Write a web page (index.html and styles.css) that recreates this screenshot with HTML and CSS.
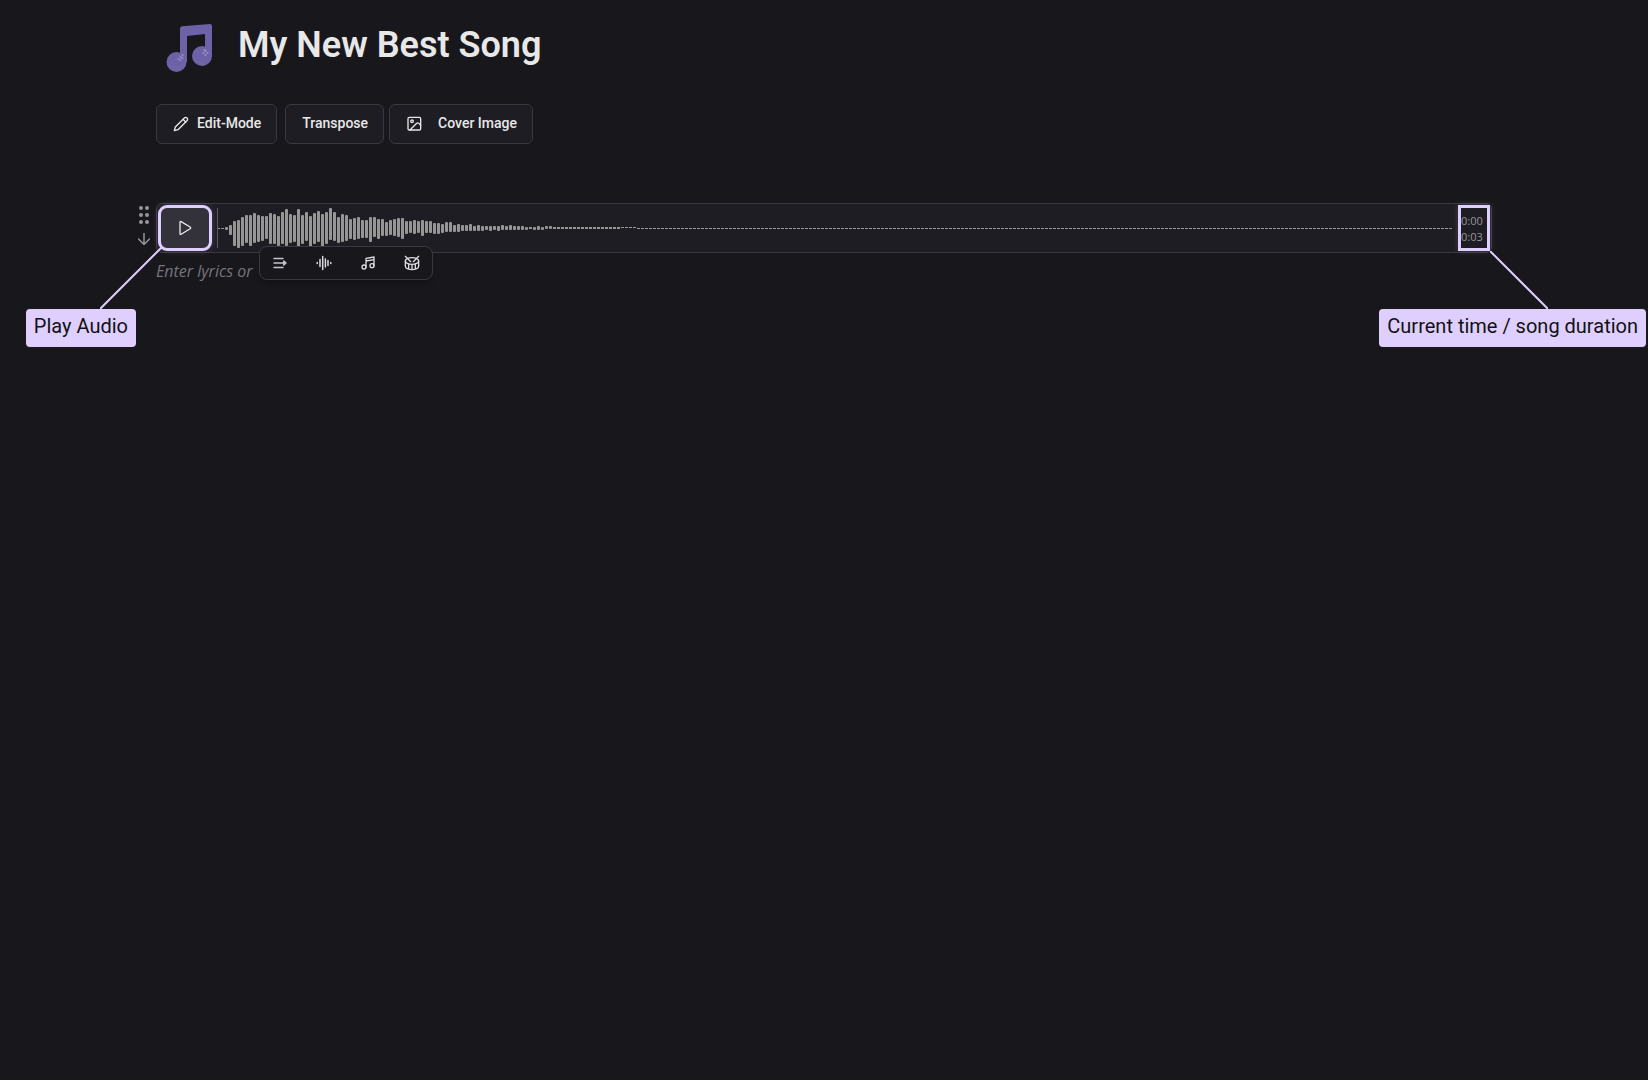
FILE: index.html
```html
<!DOCTYPE html>
<html lang="en">
<head>
  <meta charset="UTF-8">
  <meta name="viewport" content="width=device-width, initial-scale=1.0">
  <title>My New Best Song</title>
  <link rel="stylesheet" href="styles.css">
</head>
<body>
  <main class="page">
    <header class="song-header">
      <svg class="song-icon" viewBox="0 0 48 50" aria-hidden="true">
        <path d="M14 5.500Q14 3.500 16 3.200L44 1Q46 1 46 3V33H39V11L21 13V39H14Z" fill="#6d62a8"/>
        <circle cx="10.500" cy="39" r="10" fill="#6d62a8"/>
        <circle cx="36" cy="33" r="10" fill="#6d62a8"/>
        <path d="M12 36h1M14 34h1M16 32h1M14 37h1M16 35h1M37 30h1M39 28h1M41 30h1M39 32h1M38 27h1" stroke="#b9b2d4" stroke-width="1"/>
        <path d="M4 43h1M7 44h1M10 44h1M13 44h1M6 46h1M9 47h1M12 46h1M16 43h1M30 38h1M33 39h1M36 40h1M39 39h1M34 41h1M37 42h1" stroke="#777390" stroke-width="1"/>
      </svg>
      <h1>My New Best Song</h1>
    </header>

    <div class="actions">
      <button class="btn edit-btn">
        <svg class="icon" viewBox="0 0 24 24"><path d="M17 3a2.830 2.830 0 1 1 4 4L7.500 20.500 2 22l1.500-5.500Z"/><path d="m15 5 4 4"/></svg>
        Edit-Mode
      </button>
      <button class="btn">Transpose</button>
      <button class="btn cover-btn">
        <svg class="icon" viewBox="0 0 24 24"><rect x="3" y="2" width="19" height="19" rx="2"/><circle cx="9" cy="8" r="2"/><path d="m22 14-3-3a2 2 0 0 0-3 0L6 21"/></svg>
        Cover Image
      </button>
    </div>

    <!-- Audio block -->
    <section class="block">
      <div class="handle">
        <svg class="grip" viewBox="0 0 10 18"><circle cx="2" cy="2" r="2"/><circle cx="8" cy="2" r="2"/><circle cx="2" cy="9" r="2"/><circle cx="8" cy="9" r="2"/><circle cx="2" cy="16" r="2"/><circle cx="8" cy="16" r="2"/></svg>
        <svg class="down" viewBox="0 0 12 12"><path d="M6 0v11M0.500 6 6 11.500 11.500 6"/></svg>
      </div>

      <div class="player">
        <div class="play-wrap">
          <button class="play" aria-label="Play">
            <svg viewBox="0 0 14 16"><path d="M2 2.200Q2 1 3.100 1.600L12.100 7Q13.300 8 12.100 8.800L3.100 14.200Q2 14.800 2 13.600Z"/></svg>
          </button>
          <div class="callout callout-play">
            <svg viewBox="0 0 62 62"><path d="M62 0 0 62"/></svg>
            <span>Play Audio</span>
          </div>
        </div>
        <div class="wave">
          <svg id="waveform" aria-hidden="true"></svg>
          <div class="playhead"></div>
        </div>
        <div class="time">
          <span>0:00</span>
          <span>0:03</span>
          <div class="callout callout-time">
            <svg viewBox="0 0 58 58"><path d="M0 0 58 58"/></svg>
            <span>Current time / song duration</span>
          </div>
        </div>
      </div>
    </section>

    <!-- Lyrics line -->
    <section class="lyrics">
      <span class="placeholder">Enter lyrics or</span>
      <div class="toolbar">
        <button class="add-line" aria-label="Add line"><svg viewBox="0 0 16 16"><path d="M2 3.500h9M2 8h11M2 12.500h9"/><path d="M11.800 6 14 8l-2.200 2Z" fill="currentColor"/></svg></button>
        <button class="add-audio" aria-label="Add audio"><svg viewBox="0 0 16 16"><path d="M1.200 7.500v1M4 4.500v7M6.700 1.500v13M9.400 4v8M12 5.500v5M14.800 7.500v1"/></svg></button>
        <button aria-label="Add chords"><svg viewBox="0 0 24 24"><path d="M9 18V5l12-2v13M9 9l12-2"/><circle cx="6" cy="18" r="3"/><circle cx="18" cy="16" r="3"/></svg></button>
        <button aria-label="Add drums"><svg viewBox="0 0 24 24"><path d="m2 2 8 8M22 2l-8 8M7 13.400v7.900M12 14v8M17 13.400v7.900M2 9v8a10 5 0 0 0 20 0V9"/><ellipse cx="12" cy="9" rx="10" ry="5"/></svg></button>
      </div>
    </section>
  </main>

  <script>
    const waveform = document.getElementById('waveform');

    // [above, below] the center line, one pair per bar
    const peaks = [
      [1,2],[3,7],[7,18],[8,20],[11,18],[13,15],[13,18],[15,15],[13,14],[12,13],
      [12,11],[15,16],[14,16],[12,18],[16,16],[19,18],[14,15],[13,14],[19,19],[13,16],
      [16,13],[12,20],[15,16],[17,14],[14,20],[16,16],[20,12],[16,13],[11,15],[14,14],
      [13,13],[9,11],[10,12],[11,11],[8,10],[8,10],[11,14],[11,9],[9,11],[9,8],
      [6,8],[8,7],[9,8],[10,9],[10,11],[7,6],[7,5],[8,6],[7,5],[8,8],
      [7,5],[7,5],[5,6],[5,6],[4,5],[6,4],[6,4],[3,4],[4,4],[3,3],
      [3,3],[4,3],[2,3],[3,3],[2,3],[2,2],[2,3],[2,2],[2,3],[3,2],
      [2,2],[3,2],[2,2],[2,2],[2,2],[1,2],[1,1],[1,2],[2,2],[1,2],
      [2,1],[2,1]
    ];

    function drawWaveform() {
      const count = Math.floor((waveform.clientWidth + 1) / 4);
      let bars = '';
      for (let i = 0; i < count; i++) {
        const n = i - 2;
        let up = 0, down = 1;
        if (n >= 0 && n < peaks.length) {
          [up, down] = peaks[n];
        } else if (n >= peaks.length && n < 99) {
          [up, down] = [1, 1];
        } else if (n >= 99 && n < 103) {
          [up, down] = [1, 0];
        }
        const radius = up + down > 2 ? 1 : 0;
        bars += `<rect x="${i * 4}" y="${20 - up}" width="3" height="${up + down}" rx="${radius}"/>`;
      }
      waveform.innerHTML = bars;
    }

    window.addEventListener('resize', drawWaveform);
    drawWaveform();
  </script>
</body>
</html>
```

FILE: styles.css
```css
* {
  box-sizing: border-box;
}

body {
  margin: 0;
  min-height: 100vh;
  background: #18171c;
  color: #e8e8e8;
  font-family: Roboto, sans-serif;
}

button {
  font-family: inherit;
  color: inherit;
  cursor: pointer;
}

svg {
  display: block;
  flex-shrink: 0;
  fill: none;
  stroke-linecap: round;
  stroke-linejoin: round;
}

.page {
  max-width: 1360px;
  margin: 0 auto;
  padding: 24px 12px;
}

/* Header */
.song-header {
  display: flex;
  align-items: center;
  gap: 24px;
  height: 48px;
  padding-left: 10px;
}

.song-icon {
  width: 48px;
  height: 50px;
}

h1 {
  margin: 0 0 6px;
  font-size: 36px;
  line-height: 44px;
  font-weight: 600;
}

.actions {
  display: flex;
  gap: 5px;
  margin-top: 32px;
}

.btn {
  display: flex;
  align-items: center;
  gap: 8px;
  height: 40px;
  padding: 0 15px 2px 16px;
  background: #1e1d23;
  border: 1px solid #3a3943;
  border-radius: 6px;
  font-size: 14px;
  font-weight: 500;
}

.edit-btn {
  margin-right: 3px;
}

.cover-btn {
  gap: 16px;
}

.icon {
  width: 16px;
  height: 16px;
  margin-top: 2px;
  stroke: currentColor;
  stroke-width: 2;
}

/* Audio block */
.block {
  position: relative;
  margin-top: 59px;
}

.handle {
  position: absolute;
  top: 3px;
  left: -18px;
  display: flex;
  flex-direction: column;
  align-items: center;
  gap: 9px;
}

.grip {
  width: 10px;
  height: 18px;
  fill: #96959a;
}

.down {
  width: 12px;
  height: 12px;
  stroke: #96959a;
  stroke-width: 1.5;
}

.player {
  display: flex;
  align-items: center;
  height: 50px;
  padding: 1px;
  background: #1e1d23;
  border: 1px solid #3a3943;
  border-radius: 6px;
}

.play-wrap {
  position: relative;
}

.play {
  display: flex;
  align-items: center;
  justify-content: center;
  width: 54px;
  height: 46px;
  padding: 0;
  background: #33323a;
  border: 3px solid #dfcfff;
  border-radius: 9px;
  box-shadow: 0 0 6px rgba(223, 207, 255, 0.2);
}

.play svg {
  width: 14px;
  height: 16px;
  stroke: #ececec;
  stroke-width: 1.3;
}

.wave {
  position: relative;
  flex: 1;
  min-width: 0;
  height: 40px;
  margin: 0 5px;
}

.wave svg {
  width: 100%;
  height: 40px;
  fill: #969696;
}

.playhead {
  position: absolute;
  top: 0;
  left: 0;
  width: 1px;
  height: 40px;
  background: #5b5a60;
}

.time {
  position: relative;
  display: flex;
  flex-direction: column;
  justify-content: center;
  width: 32px;
  height: 46px;
  padding-top: 1px;
  border: 3px solid #dfcfff;
  box-shadow: 0 0 6px rgba(223, 207, 255, 0.2);
  color: #96959a;
  font-family: "Open Sans", sans-serif;
  font-size: 11px;
  line-height: 16px;
}

/* Callouts */
.callout {
  position: absolute;
  z-index: 2;
}

.callout svg {
  stroke: #dfcfff;
  stroke-width: 2;
}

.callout span {
  display: block;
  padding: 0 8px 4px;
  background: #dfcfff;
  border-radius: 4px;
  color: #111;
  font-family: Roboto, sans-serif;
  font-size: 20px;
  line-height: 34px;
  white-space: nowrap;
}

.callout-play {
  top: 42px;
  right: 76px;
}

.callout-play svg {
  position: absolute;
  right: -26px;
  width: 62px;
  height: 62px;
}

.callout-play span {
  margin-top: 62px;
}

.callout-time {
  top: 43px;
  right: -159px;
}

.callout-time svg {
  width: 58px;
  height: 58px;
  margin-left: 111px;
}

/* Lyrics line */
.lyrics {
  display: flex;
  align-items: flex-start;
  gap: 6px;
}

.placeholder {
  padding-top: 6px;
  color: #76757c;
  font-family: "Open Sans", sans-serif;
  font-size: 16px;
  line-height: 24px;
  font-style: italic;
}

.toolbar {
  position: relative;
  display: flex;
  gap: 4px;
  height: 34px;
  margin-top: -7px;
  background: #18171c;
  border: 1px solid #3a3943;
  border-radius: 8px;
  box-shadow: 0 6px 6px -3px rgba(0, 0, 0, 0.3);
}

.toolbar button {
  width: 40px;
  padding: 0 12px;
  background: none;
  border: 0;
  color: #dcdbe2;
}

.toolbar svg {
  width: 16px;
  height: 16px;
  stroke: currentColor;
  stroke-width: 2;
}

.toolbar .add-line {
  color: #c6c1d2;
}

.toolbar .add-line svg,
.toolbar .add-audio svg {
  stroke-width: 1.5;
}
```
